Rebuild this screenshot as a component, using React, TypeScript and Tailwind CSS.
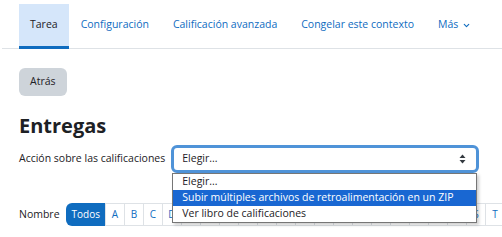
import { ChevronDown } from "lucide-react";

const TABS = [
  { label: "Tarea", active: true },
  { label: "Configuración" },
  { label: "Calificación avanzada" },
  { label: "Congelar este contexto" },
];

const LETTERS = [
  "A", "B", "C", "D", "E", "F", "G", "H", "I", "J", "K", "L", "M", "N", "Ñ",
  "O", "P", "Q", "R", "S", "T", "U", "V", "W", "X", "Y", "Z",
];

const OPTIONS = [
  "Elegir...",
  "Subir múltiples archivos de retroalimentación en un ZIP",
  "Ver libro de calificaciones",
];

export default function App() {
  return (
    <div className="h-[237px] w-[502px] overflow-hidden bg-white pt-1 font-['Open_Sans',sans-serif] text-[10.5px] text-[#1d2125]">
      <nav className="ml-[2px] border-b border-[#dee2e6]">
        <ul className="-mb-px flex pl-[17px]">
          {TABS.map((t) => (
            <li
              key={t.label}
              className={`flex h-[45px] items-center border-b-[3px] whitespace-nowrap ${
                t.active
                  ? "border-[#0f6cbf] bg-[#d5e6fa] px-[11px] text-[#1d2125]"
                  : "border-transparent px-3 text-[#0f6cbf]"
              }`}
            >
              {t.label}
            </li>
          ))}
          <li className="flex h-[45px] items-center gap-1 border-b-[3px] border-transparent px-3 text-[#0f6cbf]">
            Más
            <ChevronDown size={9} strokeWidth={3} />
          </li>
        </ul>
      </nav>

      <div className="px-[19px]">
        <button className="mt-[19px] h-7 rounded-md bg-[#ced4da] px-[11px] text-[#1d2125]">
          Atrás
        </button>

        <h2 className="mt-[20px] text-[20px] leading-none font-bold">Entregas</h2>

        <div className="mt-[9px] flex items-center gap-[6px]">
          <span className="whitespace-nowrap">Acción sobre las calificaciones</span>
          <div className="relative">
            <div className="flex h-7 w-[308px] items-center justify-between rounded-md border-[3px] border-[#4f93d8] pr-[10px] pl-[8px]">
              <span>Elegir...</span>
              <svg width="7" height="10" viewBox="0 0 7 10">
                <path d="M3.5 0.5 L6.5 4 H0.5 Z" fill="#343a40" />
                <path d="M3.5 9.5 L6.5 6 H0.5 Z" fill="#343a40" />
              </svg>
            </div>
            <ul className="absolute top-[28px] left-px z-10 w-[305px] border border-[#767676] bg-white shadow-[2px_2px_3px_rgba(0,0,0,0.2)]">
              {OPTIONS.map((o, i) => (
                <li
                  key={o}
                  className={`flex h-4 items-center pl-[9px] whitespace-nowrap ${
                    i === 1 ? "bg-[#1967d2] text-white" : "text-[#1d2125]"
                  }`}
                >
                  {o}
                </li>
              ))}
            </ul>
          </div>
        </div>

        <div className="mt-[30px] flex items-center gap-[6px] whitespace-nowrap">
          <span>Nombre</span>
          <div className="flex h-[23px]">
            <span className="flex items-center rounded-l-md bg-[#0f6cbf] px-[6px] text-[10px] text-white">
              Todos
            </span>
            {LETTERS.map((l) => (
              <span
                key={l}
                className="-ml-px flex w-[20px] shrink-0 items-center justify-center border border-[#dee2e6] text-[10px] text-[#0f6cbf] first:ml-0"
              >
                {l}
              </span>
            ))}
          </div>
        </div>
      </div>
    </div>
  );
}
